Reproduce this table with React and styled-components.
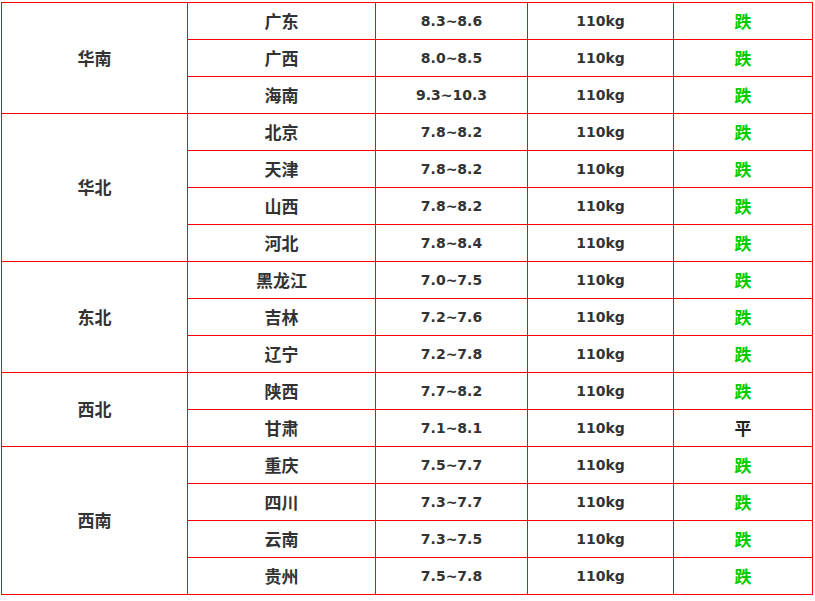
import React from 'react'
import styled, {createGlobalStyle} from 'styled-components'

const data = [
  {region: '华南', rows: [
    ['广东', '8.3~8.6', '110kg', '跌'],
    ['广西', '8.0~8.5', '110kg', '跌'],
    ['海南', '9.3~10.3', '110kg', '跌'],
  ]},
  {region: '华北', rows: [
    ['北京', '7.8~8.2', '110kg', '跌'],
    ['天津', '7.8~8.2', '110kg', '跌'],
    ['山西', '7.8~8.2', '110kg', '跌'],
    ['河北', '7.8~8.4', '110kg', '跌'],
  ]},
  {region: '东北', rows: [
    ['黑龙江', '7.0~7.5', '110kg', '跌'],
    ['吉林', '7.2~7.6', '110kg', '跌'],
    ['辽宁', '7.2~7.8', '110kg', '跌'],
  ]},
  {region: '西北', rows: [
    ['陕西', '7.7~8.2', '110kg', '跌'],
    ['甘肃', '7.1~8.1', '110kg', '平'],
  ]},
  {region: '西南', rows: [
    ['重庆', '7.5~7.7', '110kg', '跌'],
    ['四川', '7.3~7.7', '110kg', '跌'],
    ['云南', '7.3~7.5', '110kg', '跌'],
    ['贵州', '7.5~7.8', '110kg', '跌'],
  ]},
]

const colWidths = [186, 188, 152, 146, 139]

const App = () => {
  return (
    <>
      <GlobalStyle/>
      <Wrap>
        <PriceTable>
          <colgroup>
            {colWidths.map((w, i) => <Col key={i} $w={w}/>)}
          </colgroup>
          <tbody>
            {data.map(group =>
              group.rows.map((row, i) => (
                <tr key={row[0]}>
                  {i === 0 &&
                    <TextCell rowSpan={group.rows.length}>{group.region}</TextCell>
                  }
                  <TextCell>{row[0]}</TextCell>
                  <NumCell>{row[1]}</NumCell>
                  <NumCell>{row[2]}</NumCell>
                  <TrendCell $down={row[3] === '跌'}>{row[3]}</TrendCell>
                </tr>
              ))
            )}
          </tbody>
        </PriceTable>
      </Wrap>
    </>
  )
}

export default App;

const GlobalStyle = createGlobalStyle`
  body {
    margin: 0;
    background: #fff;
    font-family: "Noto Sans CJK SC", "Noto Sans", sans-serif;
  }
`

const Wrap = styled.div`
  padding: 2px 0 0 1px;
`

const PriceTable = styled.table`
  border-collapse: collapse;
  table-layout: fixed;
  width: 812px;
`

const Col = styled.col`
  width: ${p => p.$w}px;
`

const Cell = styled.td`
  border: 1px solid #ff0000;
  height: 37px;
  padding: 0 0 2px;
  box-sizing: border-box;
  text-align: center;
  vertical-align: middle;
  color: #333;
  font-weight: bold;
`

const TextCell = styled(Cell)`
  font-size: 17px;
`

const NumCell = styled(Cell)`
  font-family: "DejaVu Sans", "Open Sans", sans-serif;
  font-size: 14px;
  padding: 0;
`

const TrendCell = styled(Cell)`
  font-size: 17px;
  color: ${p => p.$down ? '#00cc00' : '#222'};
`
